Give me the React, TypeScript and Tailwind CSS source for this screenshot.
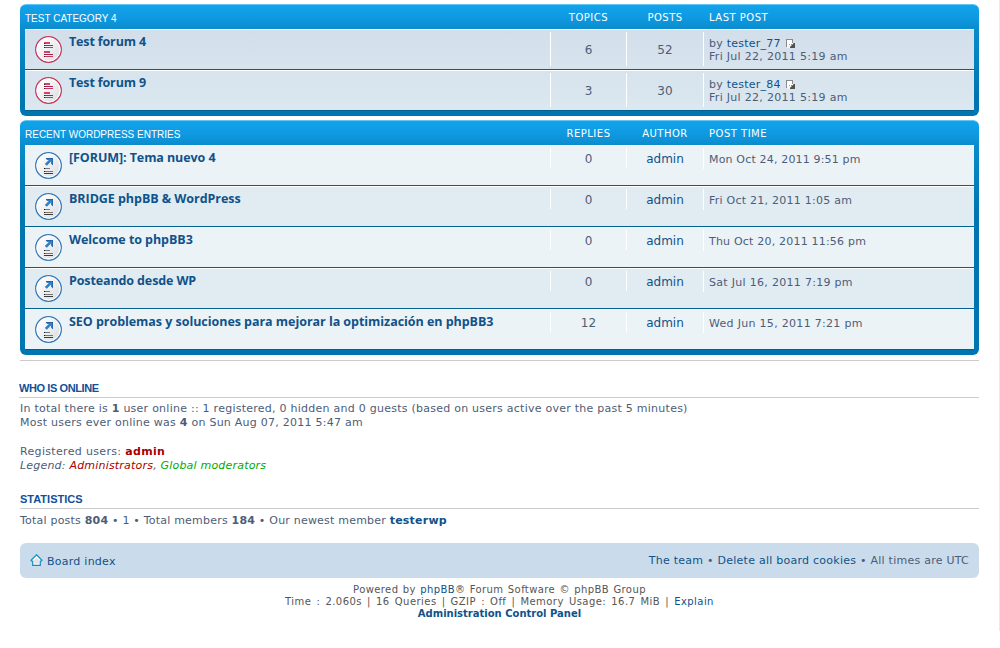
import React from "react";

type Kind = "forum" | "entry";

function RowIcon({ kind }: { kind: Kind }) {
  const ring = kind === "forum" ? "#c4385c" : "#3478b8";
  const id = kind === "forum" ? "disc-forum" : "disc-entry";
  return (
    <svg width="27" height="27" viewBox="0 0 27 27" className="mt-[6px] ml-[10px] block shrink-0">
      <defs>
        <linearGradient id={id} x1="0" y1="0" x2="1" y2="1">
          <stop offset="0.25" stopColor="#fafafb" />
          <stop offset="1" stopColor="#d8dade" />
        </linearGradient>
      </defs>
      <circle cx="13.5" cy="13.5" r="12.8" fill={`url(#${id})`} stroke={ring} strokeWidth="1.3" />
      <circle cx="13.5" cy="13.5" r="11.6" fill="none" stroke="#ffffff" strokeWidth="1" />
      {kind === "forum" ? (
        <g shapeRendering="crispEdges">
          <path d="M9 6h6v2H9zM9 15h6v2H9z" fill="#d4416c" />
          <path d="M9 9h9v1H9zM9 18h9v1H9z" fill="#a8244c" />
          <path d="M9 11h9v1H9zM9 20h9v1H9z" fill="#c23a64" />
          <path d="M9 9h1v1H9zM9 11h1v1H9zM9 18h1v1H9zM9 20h1v1H9zM9 7h1v1H9z" fill="#5c1028" />
        </g>
      ) : (
        <g>
          <path d="M10.8 6H18v7.2l-2-1.4V9.6l-4.2 4.2-2-1.8L13.8 8h-1.9z" fill="#2f80c6" />
          <path d="M10.8 6H18v7.2l-.8-.6V6.9h-5.7z" fill="#1f64a6" />
          <g shapeRendering="crispEdges">
            <path d="M9 16h6v1H9z" fill="#777777" />
            <path d="M9 19h9v1H9z" fill="#777777" />
            <path d="M9 21h9v1H9z" fill="#3c3c3c" />
            <path d="M9 16h1v1H9zM9 19h1v1H9z" fill="#111111" />
          </g>
        </g>
      )}
    </svg>
  );
}

function LatestPost() {
  return (
    <svg width="9" height="9" viewBox="0 0 9 9" shapeRendering="crispEdges" className="ml-[5px] inline-block align-[-1px]">
      <path d="M0 0h7v4h2v5H2V8H0z" fill="#8a8a8a" />
      <path d="M1 1h5v3h1v1H5v2H3v1H2V7H1z" fill="#ffffff" />
      <path d="M8 4h1v5H4V8h1V7h1V6h1V5h1z" fill="#505050" />
      <path d="M1 7h3v2H1zM2 6h3v1H2z" fill="#f2f4f6" />
      <path d="M3 5h1v1H3zM5 6h1v1H5z" fill="#9a9a9a" />
    </svg>
  );
}

function Panel({ title, cols, children }: { title: string; cols: string[]; children: React.ReactNode }) {
  return (
    <section className="mb-1 rounded-[6px] border-t border-[#63c5f4] bg-[linear-gradient(to_bottom,#12a3eb_0px,#0f9ae3_12px,#0a8bcb_25px,#0076b1_90px)] px-[5px] pb-[5px]">
      <header className="flex h-6 text-[10px] leading-[26px] tracking-[0.5px] text-white">
        <h2 className="w-[525px] pt-px font-['Liberation_Sans',sans-serif] tracking-[0px]">{title}</h2>
        <span className="w-[76px] pl-px text-center">{cols[0]}</span>
        <span className="w-[77px] pl-px text-center">{cols[1]}</span>
        <span className="w-[271px] pl-[6px]">{cols[2]}</span>
      </header>
      {children}
    </section>
  );
}

const forums = [
  ["Test forum 4", "6", "52", "tester_77"],
  ["Test forum 9", "3", "30", "tester_84"],
];

const entries = [
  ["[FORUM]: Tema nuevo 4", "0", "Mon Oct 24, 2011 9:51 pm", "tracking-[-0.08px]", "tracking-[0.17px]"],
  ["BRIDGE phpBB & WordPress", "0", "Fri Oct 21, 2011 1:05 am", "tracking-[-0.05px]", "tracking-[0.25px]"],
  ["Welcome to phpBB3", "0", "Thu Oct 20, 2011 11:56 pm", "tracking-[-0.06px]", "tracking-[0.2px]"],
  ["Posteando desde WP", "0", "Sat Jul 16, 2011 7:19 pm", "tracking-[-0.12px]", "tracking-[0.3px]"],
  ["SEO problemas y soluciones para mejorar la optimización en phpBB3", "12", "Wed Jun 15, 2011 7:21 pm", "tracking-[-0.04px]", "tracking-[0.3px]"],
];

const titleLink = "ml-[7px] pt-[3px] text-[12.5px] leading-[18px] font-bold text-[#105289] font-['Open_Sans',sans-serif] whitespace-nowrap ";
const heading = "border-b border-[#cccccc] font-bold text-[#115098] font-['Liberation_Sans',sans-serif] uppercase leading-[14px] ";
const link = "text-[#105289]";

export default function App() {
  return (
    <div className="h-[648px] w-[1000px] overflow-hidden bg-white font-['DejaVu_Sans',Verdana,sans-serif] text-[11px] text-[#4c5d77]">
      <div className="h-[631px] border-r border-[#e6e9ed] pt-1 pr-5 pl-5">
        <Panel title="TEST CATEGORY 4" cols={["TOPICS", "POSTS", "LAST POST"]}>
          <div className="bg-[linear-gradient(to_bottom,#d2deea,#dce8f0)]">
            {forums.map(([name, topics, posts, user]) => (
              <div key={name} className="flex h-[41px] border-t border-b border-t-white border-b-[#00608f]">
                <div className="flex w-[525px]">
                  <RowIcon kind="forum" />
                  <a className={titleLink + "tracking-[-0.14px]"}>{name}</a>
                </div>
                <div className="mt-[2px] h-[34px] w-[76px] border-l border-white text-center text-[12px] leading-[36px]">{topics}</div>
                <div className="mt-[2px] h-[34px] w-[77px] border-l border-white text-center text-[12px] leading-[36px]">{posts}</div>
                <div className="mt-[2px] h-[34px] w-[271px] border-l border-white pt-[5px] pl-[5px] leading-[13px] tracking-[0.3px]">
                  <p className="h-[13px] tracking-[0.24px]">by <a className={link}>{user}</a><LatestPost /></p>
                  <p>Fri Jul 22, 2011 5:19 am</p>
                </div>
              </div>
            ))}
          </div>
        </Panel>

        <Panel title="RECENT WORDPRESS ENTRIES" cols={["REPLIES", "AUTHOR", "POST TIME"]}>
          {entries.map(([name, replies, date, nameTrack, dateTrack], i) => (
            <div key={name} className={"flex h-[41px] border-t border-b border-t-white border-b-[#00608f] " + (i % 2 ? "bg-[#e1ebf2]" : "bg-[#ecf3f7]")}>
              <div className="flex w-[525px]">
                <RowIcon kind="entry" />
                <a className={titleLink + nameTrack}>{name}</a>
              </div>
              <div className="mt-[2px] h-5 w-[76px] border-l border-white text-center text-[12px] leading-[22px]">{replies}</div>
              <div className={"mt-[2px] h-5 w-[77px] border-l border-white text-center text-[12px] leading-[22px] " + link}>admin</div>
              <div className={"mt-[2px] h-[21px] w-[271px] border-l border-white pl-[5px] leading-[24px] " + dateTrack}>{date}</div>
            </div>
          ))}
        </Panel>

        <hr className="mt-[5px] border-[#cccccc]" />

        <h3 className={heading + "mt-[20px] h-[17px] -ml-px text-[11px] tracking-[-0.4px]"}>Who is online</h3>
        <div className="pt-[4px] leading-[14px] tracking-[0.25px]">
          <p>In total there is <b>1</b> user online :: 1 registered, 0 hidden and 0 guests (based on users active over the past 5 minutes)</p>
          <p>Most users ever online was <b>4</b> on Sun Aug 07, 2011 5:47 am</p>
          <p className="mt-[15px] tracking-[0.33px]">Registered users: <b className="text-[#aa0000]">admin</b></p>
          <p className="-mb-px tracking-[0.2px] italic">Legend: <a className="text-[#aa0000]">Administrators</a>, <a className="text-[#00aa00]">Global moderators</a></p>
        </div>

        <h3 className={heading + "mt-[20px] h-[17px] text-[11px] tracking-[0px]"}>Statistics</h3>
        <p className="h-[34px] pt-[5px] leading-[14px] tracking-[0.21px]">Total posts <b>804</b> • 1 • Total members <b>184</b> • Our newest member <b className={link}>testerwp</b></p>

        <nav className="flex h-[35px] items-center rounded-[6px] bg-[#cadceb] px-[10px] tracking-[0.25px]">
          <svg width="13" height="12" viewBox="0 0 13 12" className="mr-1 -mt-px">
            <path d="M6.5 .8L12 6.2l-.8.9h-.9v4.3H2.7V7.1h-.9L1 6.2z" fill="#f8fafc" stroke="#168fc4" strokeWidth="1.2" />
            <path d="M6.5 4L9 6.5v3H4v-3z" fill="#dfe2e6" />
          </svg>
          <a className={"pt-[3px] " + link}>Board index</a>
          <p className="ml-auto pt-px"><a className={link}>The team</a> • <a className={link}>Delete all board cookies</a> • All times are UTC</p>
        </nav>

        <footer className="pt-[6px] text-center text-[10px] leading-[12px] text-[#555555]">
          <p className="tracking-[0.4px] [word-spacing:0.8px]">Powered by <a className={link}>phpBB</a>® Forum Software © phpBB Group</p>
          <p className="tracking-[0.45px] [word-spacing:1.5px]">Time : 2.060s | 16 Queries | GZIP : Off | Memory Usage: 16.7 MiB | <a className={link}>Explain</a></p>
          <p><b className={link}>Administration Control Panel</b></p>
        </footer>
      </div>
    </div>
  );
}
